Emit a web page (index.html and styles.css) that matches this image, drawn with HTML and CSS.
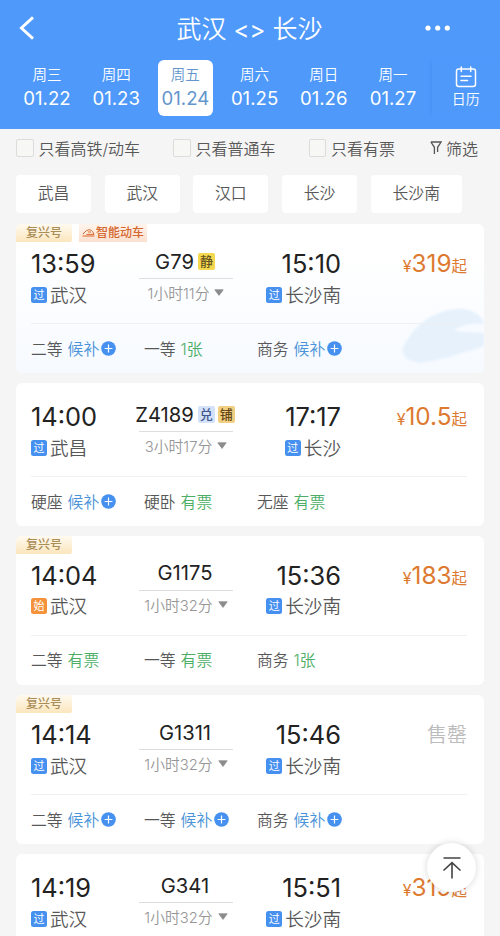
FILE: index.html
```html
<!DOCTYPE html>
<html lang="zh-CN">
<head>
<meta charset="utf-8">
<title>武汉 - 长沙</title>
<link rel="stylesheet" href="styles.css">
</head>
<body>
<svg class="defs" width="0" height="0">
  <symbol id="plus" viewBox="0 0 15 15"><circle cx="7.5" cy="7.5" r="7.3" fill="#4690f0"/><path d="M7.5 3.6v7.8M3.6 7.5h7.8" stroke="#fff" stroke-width="1.2"/></symbol>
  <symbol id="down" viewBox="0 0 10 7"><path d="M.8.8h8.4L5 6.4z" fill="#8c8c8c" stroke="#8c8c8c" stroke-width=".8" stroke-linejoin="round"/></symbol>
</svg>
<header class="header">
  <div class="bar">
    <svg class="back" width="16" height="24" viewBox="0 0 16 24"><path d="M14 1.400L2.400 12l11.600 10.600" fill="none" stroke="#fff" stroke-width="2.900"/></svg>
    <h1 class="title">武汉 <span class="swap">&lt;&gt;</span> 长沙</h1>
    <svg class="more" width="26" height="6" viewBox="0 0 26 6" fill="#fff"><circle cx="3" cy="3" r="2.6"/><circle cx="12.7" cy="3" r="2.6"/><circle cx="22.3" cy="3" r="2.6"/></svg>
  </div>
  <div class="days">
    <div class="day"><span>周三</span><b>01.22</b></div>
    <div class="day"><span>周四</span><b>01.23</b></div>
    <div class="day on"><span>周五</span><b>01.24</b></div>
    <div class="day"><span>周六</span><b>01.25</b></div>
    <div class="day"><span>周日</span><b>01.26</b></div>
    <div class="day"><span>周一</span><b>01.27</b></div>
    <div class="calendar">
      <svg width="22" height="22" viewBox="0 0 22 22" fill="none" stroke="#fff" stroke-width="1.5"><rect x="1.5" y="3" width="19" height="17.5" rx="2.2"/><path d="M6.3 1v4.4M15.7 1v4.4M6 10.2h10M6 14.4h6.6" stroke-linecap="round"/></svg>
      <span>日历</span>
    </div>
  </div>
</header>
<div class="filters">
  <label class="check c1"><i></i>只看高铁/动车</label>
  <label class="check c2"><i></i>只看普通车</label>
  <label class="check c3"><i></i>只看有票</label>
  <div class="sift"><svg width="12" height="14" viewBox="0 0 12 14" fill="none" stroke="#555" stroke-width="1.3"><path d="M.9 1h10.2L7.6 6.3V11M.9 1l3.5 5.3V13"/></svg>筛选</div>
</div>
<div class="stations">
  <span>武昌</span><span>武汉</span><span>汉口</span><span>长沙</span><span class="wide">长沙南</span>
</div>
<main class="list">
  <section class="card tagged smart">
    <svg class="train" width="84" height="62" viewBox="0 0 84 62"><path d="M3 42C14 17 38 2 62 3c12 1 20 7 22 15v22C61 48 39 54 20 57 8 55 1 50 3 42z" fill="#e6f1fc"/><path d="M54 24c10-6 20-7 30-6v9c-13-1-22 0-30-3z" fill="#f7fbff"/></svg>
    <div class="tags"><span class="tag fx">复兴号</span><span class="tag zn"><svg width="13" height="8" viewBox="0 0 13 8" fill="none" stroke="#d8682c" stroke-width="1"><path d="M1 5.2C3.3 1.8 6 .4 8.2.9c2 .6 3 2.400 3.700 4.500H4.500M.5 7h12M6 3h3"/></svg>智能动车</span></div>
    <div class="trip">
      <div class="time">13:59</div><div class="no">G79<em class="jing">静</em></div><div class="time end">15:10</div><div class="price"><small>¥</small>319<span>起</span></div>
      <div class="place"><i>过</i>武汉</div><div class="dur">1小时11分<svg width="10" height="7"><use href="#down"/></svg></div><div class="place end"><i>过</i>长沙南</div>
    </div>
    <div class="seats"><div>二等<a>候补</a><svg width="15" height="15"><use href="#plus"/></svg></div><div>一等<b>1张</b></div><div>商务<a>候补</a><svg width="15" height="15"><use href="#plus"/></svg></div></div>
  </section>
  <section class="card">
    <div class="trip">
      <div class="time">14:00</div><div class="no">Z4189<em class="dui">兑</em><em class="pu">铺</em></div><div class="time end">17:17</div><div class="price"><small>¥</small>10.5<span>起</span></div>
      <div class="place"><i>过</i>武昌</div><div class="dur">3小时17分<svg width="10" height="7"><use href="#down"/></svg></div><div class="place end"><i>过</i>长沙</div>
    </div>
    <div class="seats"><div>硬座<a>候补</a><svg width="15" height="15"><use href="#plus"/></svg></div><div>硬卧<b>有票</b></div><div>无座<b>有票</b></div></div>
  </section>
  <section class="card tagged">
    <div class="tags"><span class="tag fx">复兴号</span></div>
    <div class="trip">
      <div class="time">14:04</div><div class="no">G1175</div><div class="time end">15:36</div><div class="price"><small>¥</small>183<span>起</span></div>
      <div class="place"><i class="start">始</i>武汉</div><div class="dur">1小时32分<svg width="10" height="7"><use href="#down"/></svg></div><div class="place end"><i>过</i>长沙南</div>
    </div>
    <div class="seats"><div>二等<b>有票</b></div><div>一等<b>有票</b></div><div>商务<b>1张</b></div></div>
  </section>
  <section class="card tagged">
    <div class="tags"><span class="tag fx">复兴号</span></div>
    <div class="trip">
      <div class="time">14:14</div><div class="no">G1311</div><div class="time end">15:46</div><div class="price sold">售罄</div>
      <div class="place"><i>过</i>武汉</div><div class="dur">1小时32分<svg width="10" height="7"><use href="#down"/></svg></div><div class="place end"><i>过</i>长沙南</div>
    </div>
    <div class="seats"><div>二等<a>候补</a><svg width="15" height="15"><use href="#plus"/></svg></div><div>一等<a>候补</a><svg width="15" height="15"><use href="#plus"/></svg></div><div>商务<a>候补</a><svg width="15" height="15"><use href="#plus"/></svg></div></div>
  </section>
  <section class="card last">
    <div class="trip">
      <div class="time">14:19</div><div class="no">G341</div><div class="time end">15:51</div><div class="price"><small>¥</small>319<span>起</span></div>
      <div class="place"><i>过</i>武汉</div><div class="dur">1小时32分<svg width="10" height="7"><use href="#down"/></svg></div><div class="place end"><i>过</i>长沙南</div>
    </div>
  </section>
</main>
<div class="top"><svg width="20" height="24" viewBox="0 0 20 24" fill="none" stroke="#444" stroke-width="1.6"><path d="M1.500 2h17M10 22.500V7M1.500 14.500L10 6.700l8.500 7.800"/></svg></div>
</body>
</html>
```
FILE: styles.css
```css
* { box-sizing: border-box; }
html, body { height: 936px; overflow: hidden; }
body { margin: 0; width: 500px; background: #f5f5f5; color: #585858; font-family: Inter, "Noto Sans CJK SC", sans-serif; white-space: nowrap; }
i, em { font-style: normal; }
svg { flex: none; display: block; }
.defs { position: absolute; }

.header { height: 129px; background: #4e99fa; color: #fff; }
.bar { height: 60px; padding: 0 49px 4px 19px; display: grid; grid-template-columns: 60px 1fr 26px; align-items: center; }
.title { margin: 0; padding: 2px 5px 0 0; text-align: center; font-size: 25px; line-height: 36px; font-weight: 350; }
.swap { font-size: 24px; font-weight: 400; }
.days { display: flex; padding-left: 19.400px; }
.day { width: 55.200px; height: 56px; margin-right: 14px; padding-top: 4px; display: flex; flex-direction: column; align-items: center; border-radius: 6px; }
.day span { font-size: 14.500px; line-height: 21px; font-weight: 350; }
.day b { font-size: 18.600px; line-height: 27px; font-weight: 400; }
.day.on { background: #fff; color: #6395cd; }
.calendar { flex: 1; margin-left: -3px; height: 56px; padding: 6px 0 0 0; display: flex; flex-direction: column; align-items: center; box-shadow: -3px 0 3px -2px #488ff0; }
.calendar span { font-size: 14px; line-height: 20px; margin-top: 1px; font-weight: 350; }

.filters { height: 45.500px; padding: 0 22px 8px 16px; display: flex; align-items: center; font-size: 16px; font-weight: 350; }
.check { display: flex; align-items: center; }
.check i { width: 17.500px; height: 17.500px; margin-right: 5px; border: 1.500px solid #dcdcda; border-radius: 2px; background: #f7f7f5; }
.c1 { width: 157px; }
.c2 { width: 135.500px; }
.sift { margin-left: auto; display: flex; align-items: center; gap: 4px; }
.stations { display: flex; gap: 13.700px; padding-left: 16px; height: 49.500px; }
.stations span { width: 75px; height: 38px; line-height: 37px; border-radius: 4px; background: #fff; text-align: center; font-size: 15.800px; font-weight: 350; }
.stations .wide { width: 91px; }

.list { display: flex; flex-direction: column; gap: 10px; padding: 0 16px; }
.card { position: relative; height: 142.500px; flex: none; padding: 17px 17px 0 15px; border-radius: 6px; background: #fff; overflow: hidden; }
.tagged { height: 149.300px; padding-top: 0; }
.smart { background: linear-gradient(#fff 20%, #f6faff); }
.last { height: 82px; border-radius: 6px 6px 0 0; }
.train { position: absolute; right: 0; bottom: 5px; filter: blur(1px); }
.tags { height: 23px; margin-left: -15px; display: flex; gap: 7px; }
.tag { height: 18px; line-height: 18px; font-size: 12px; font-weight: 500; }
.fx { width: 56px; text-align: center; color: #a98c56; background: linear-gradient(#fffaf0, #fbe6bd); border-radius: 0 0 2px 0; }
.zn { width: 68px; display: flex; align-items: center; justify-content: center; gap: 1px; color: #d4682f; background: linear-gradient(#fff4ec, #fbe0cf); }

.trip { position: relative; display: grid; grid-template-columns: 108px 94px 108px 1fr; grid-template-rows: 32px 30px; }
.time { font-size: 25.400px; line-height: 34px; color: #222; }
.end { text-align: right; justify-content: flex-end; }
.no { height: 33px; display: flex; align-items: center; justify-content: center; border-bottom: 1px solid #dedede; font-size: 20.200px; color: #222; padding: 0 2px 2px 0; margin-top: -1px; }
.no em { width: 17px; height: 17px; margin-left: 4px; flex: none; border-radius: 2px; font-size: 13px; line-height: 17px; text-align: center; font-weight: 500; }
.no em + em { margin-left: 3px; }
.jing { background: #f4d850; color: #665320; }
.dui { background: #d3e1fa; color: #42588c; }
.pu { background: #f0cf80; color: #644718; }
.price { color: #dd7a30; font-size: 24.300px; line-height: 33px; text-align: right; }
.price small { font-size: 16px; }
.price span { font-size: 15.500px; }
.price.sold { color: #bcbcbc; font-size: 20px; font-weight: 350; padding-top: 1px; }
.place { display: flex; align-items: center; font-size: 18.600px; line-height: 28px; height: 31px; font-weight: 350; }
.place i { width: 16px; height: 16px; margin-right: 3px; border-radius: 2.500px; background: #4690f0; color: #fff; font-size: 11px; line-height: 16px; text-align: center; font-weight: 400; }
.place .start { background: #f3923a; }
.dur { display: flex; align-items: center; justify-content: center; gap: 5px; height: 27px; font-size: 14.800px; color: #969696; font-weight: 350; }
.seats { position: relative; display: grid; grid-template-columns: 113px 113px 1fr; height: 51px; margin-top: 14px; border-top: 1px solid #eef0f1; font-size: 15.800px; }
.seats div { display: flex; align-items: center; height: 48px; font-weight: 350; }
.seats a, .seats b { margin-left: 5px; font-weight: 350; }
.seats a { color: #4a93d8; }
.seats b { color: #4cae66; }
.seats svg { margin-left: 2px; }

.top { position: absolute; left: 427px; top: 843px; width: 49px; height: 49px; border-radius: 50%; background: #fff; box-shadow: 0 0 7px rgba(0,0,0,.16); display: flex; align-items: center; justify-content: center; }
```
